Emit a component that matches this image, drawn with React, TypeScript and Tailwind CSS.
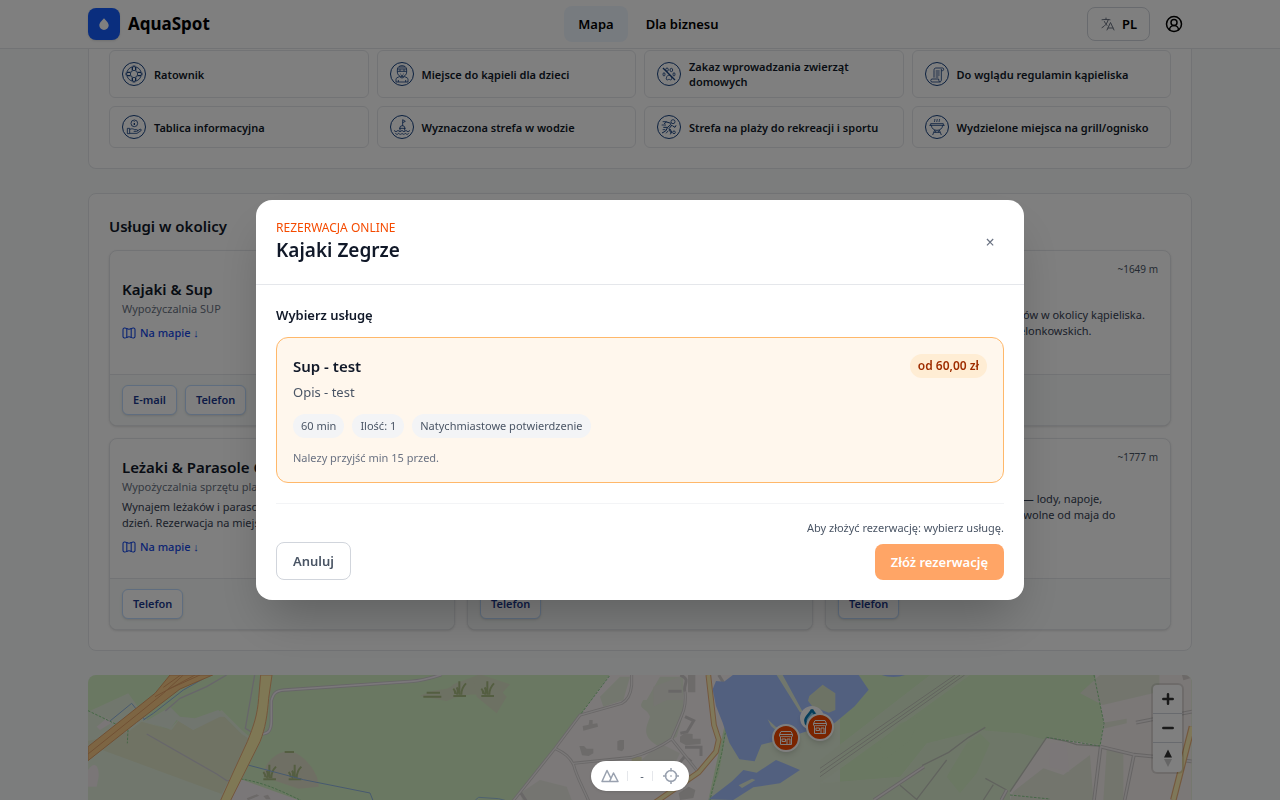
import { useState } from "react";
import type { ReactNode } from "react";
import { CircleUserRound } from "lucide-react";
import { HiOutlineLanguage } from "react-icons/hi2";

/* Amenity pictograms, drawn on a 72x72 grid */
const pictograms: Record<string, ReactNode> = {
  lifebuoy: (
    <>
      <circle cx="36" cy="36" r="22" />
      <circle cx="36" cy="36" r="11" />
      <path d="M31 15v10M41 15v10M31 47v10M41 47v10M15 31h10M15 41h10M47 31h10M47 41h10" strokeWidth="4" />
      <path d="M12 32v8M60 32v8M32 12h8M32 60h8" />
    </>
  ),
  child: (
    <>
      <path d="M22 24c0-9 6-13 14-13s14 4 14 13v6c0 8-6 14-14 14s-14-6-14-14z" />
      <path d="M22 21h28M22 28h28M27 15h18M30 22v6M42 22v6" />
      <path d="M31 36h2M39 36h2M33 40h6" />
      <path d="M18 60V52c0-4 4-6 11-8 2 5 12 5 14 0 7 2 11 4 11 8v8zM25 60v-6M47 60v-6" />
    </>
  ),
  noPets: (
    <>
      <ellipse cx="30" cy="23" rx="4" ry="5" />
      <ellipse cx="43" cy="24" rx="4" ry="5" />
      <ellipse cx="21" cy="37" rx="3" ry="5" />
      <ellipse cx="51" cy="37" rx="3" ry="5" />
      <path d="M29 53c-3-3 0-7 1-10 2-5 10-5 12 0 1 4 4 7 1 10-3 2-4-1-7-1s-4 3-7 1z" />
      <path d="M18 18l36 36" strokeWidth="4" />
    </>
  ),
  rules: (
    <>
      <path d="M27 47V25c0-5 2-7 6-7h20c4 0 4 8 0 8h-4v28c0 4-3 6-6 6H21c-5 0-5-9 0-9h20c0 6 2 9 5 9" />
      <path d="M32 27h12M32 33h12M32 39h12M32 45h8" />
      <path d="M49 26v-5" />
    </>
  ),
  info: (
    <>
      <circle cx="37" cy="25" r="10" />
      <path d="M37 24v6M37 19v1" strokeWidth="4" />
      <path d="M16 40h7v16h-7zM23 43c8-3 11-1 15 1h6c4 0 4 5 0 5h-9M45 48l9-5c4-1 5 2 3 4L45 55H23" />
    </>
  ),
  buoy: (
    <>
      <path d="M38 33V14l8 5-8 4M30 47V36c0-5 14-5 14 0v11M27 40h20" />
      <path d="M12 46c4 5 8 5 12 0 4 5 8 5 12 0 4 5 8 5 12 0 4 5 8 5 12 0M16 55c4 4 7 4 10 0 4 4 7 4 10 0 4 4 7 4 10 0 4 4 7 4 10 0" />
    </>
  ),
  sport: (
    <>
      <circle cx="48" cy="20" r="6" />
      <circle cx="51" cy="52" r="4" />
      <path d="M42 25l-13-4-8 5M43 27l-11 10-13 0M45 30l-9 11 5 12M32 37l-6 11-11 6M39 42l5 9-4 7M46 32l8 5 3-6" strokeWidth="3" />
      <path d="M17 20h12M14 30h13M17 44h8M27 55l7-8" />
    </>
  ),
  grill: (
    <>
      <path d="M17 26h38v5H17zM19 31c1 10 8 15 17 15s16-5 17-15M13 31h5M54 31h5" />
      <path d="M29 45l-6 15M43 45l6 15M27 52h18M32 47v5M40 47v5" />
      <path d="M29 21c-3-4 3-5 0-9M36 21c-3-4 3-5 0-9M43 21c-3-4 3-5 0-9" />
    </>
  ),
};

const amenities = [
  { icon: "lifebuoy", label: "Ratownik" },
  { icon: "child", label: "Miejsce do kąpieli dla dzieci" },
  { icon: "noPets", label: "Zakaz wprowadzania zwierząt domowych" },
  { icon: "rules", label: "Do wglądu regulamin kąpieliska" },
  { icon: "info", label: "Tablica informacyjna" },
  { icon: "buoy", label: "Wyznaczona strefa w wodzie" },
  { icon: "sport", label: "Strefa na plaży do rekreacji i sportu" },
  { icon: "grill", label: "Wydzielone miejsca na grill/ognisko" },
];

type Service = {
  name: string;
  kind?: string;
  text?: string;
  onMap?: boolean;
  distance?: string;
  actions: string[];
};

const services: Service[] = [
  { name: "Kajaki & Sup", kind: "Wypożyczalnia SUP", onMap: true, actions: ["E-mail", "Telefon"] },
  {
    name: "Kajaki Zegrze",
    text: "Kajaki i deski SUP na godziny lub na cały dzień.\nRezerwacja online albo na miejscu.",
    onMap: true,
    actions: ["Telefon"],
  },
  {
    name: "Parking leśny",
    text: "Parkingi dla samochodów lub rowerów w okolicy kąpieliska.\nDojazdy od strony ulicy Wczasów Zielonkowskich.",
    distance: "~1649 m",
    actions: [],
  },
  {
    name: "Leżaki & Parasole Chill",
    kind: "Wypożyczalnia sprzętu plażowego",
    text: "Wynajem leżaków i parasoli na godziny lub cały\ndzień. Rezerwacja na miejscu lub telefonicznie.",
    onMap: true,
    actions: ["Telefon"],
  },
  { name: "Szkoła żeglarstwa", kind: "Kursy i szkolenia", onMap: true, actions: ["Telefon"] },
  {
    name: "Bar na plaży",
    text: "Mała gastronomia przy samej plaży — lody, napoje,\nprzekąski. Czynne też w weekendy i wolne od maja do",
    onMap: true,
    distance: "~1777 m",
    actions: ["Telefon"],
  },
];

function Header() {
  return (
    <header className="border-b border-gray-200 bg-white">
      <div className="mx-auto flex h-12 max-w-6xl items-center justify-between px-6">
        <a href="#" className="flex items-center gap-2">
          <span className="flex size-8 items-center justify-center rounded-lg bg-blue-600 shadow-sm">
            <svg viewBox="0 0 16 16" className="size-4 fill-white">
              <path d="M8 2.2c.8 1.4 4.7 4 4.7 7.1a4.7 4.7 0 0 1-9.4 0C3.3 6.2 7.2 3.6 8 2.2z" />
            </svg>
          </span>
          <span className="text-[17px] leading-7 font-bold text-black">AquaSpot</span>
        </a>
        <nav className="flex gap-1 text-[13px] leading-5 font-semibold text-black">
          <a href="#" className="rounded-lg bg-blue-50 px-3.5 py-2">Mapa</a>
          <a href="#" className="rounded-lg px-3.5 py-2">Dla biznesu</a>
        </nav>
        <div className="flex items-center gap-1.5">
          <button className="flex items-center gap-1.5 rounded-lg border border-gray-300 px-3 py-1.5 text-[13px] leading-5 font-semibold text-black">
            <HiOutlineLanguage className="size-4 text-gray-500" />
            PL
          </button>
          <button className="flex size-9 items-center justify-center text-black" aria-label="Konto">
            <CircleUserRound className="size-[18px]" />
          </button>
        </div>
      </div>
    </header>
  );
}

function Amenities() {
  return (
    <section className="rounded-b-lg border border-t-0 border-gray-200 bg-white px-5 pt-px pb-5">
      <ul className="grid grid-cols-4 gap-2">
        {amenities.map((item) => (
          <li key={item.label} className="flex items-center gap-2 rounded-md border border-gray-200 px-3 py-2">
            <svg viewBox="0 0 72 72" className="size-6 shrink-0 fill-none stroke-[#16407f]" strokeWidth="2.5" strokeLinejoin="round">
              <circle cx="36" cy="36" r="34.5" strokeWidth="3" />
              {pictograms[item.icon]}
            </svg>
            <span className="text-[11px] leading-[15px] font-semibold text-gray-900">{item.label}</span>
          </li>
        ))}
      </ul>
    </section>
  );
}

function FoldedMapIcon() {
  return (
    <svg viewBox="0 0 14 14" className="size-3.5 fill-none stroke-current" strokeWidth="1.1" strokeLinejoin="round">
      <path d="M1 3.4C1 2 3 1.500 4.800 2.600 6.200 3.400 7.800 3.400 9.200 2.600 11 1.500 13 2 13 3.400V10.600C13 12 11 12.500 9.200 11.400 7.800 10.600 6.200 10.600 4.800 11.400 3 12.500 1 12 1 10.600z" />
      <path d="M4.8 2.600v8.800M9.200 2.600v8.800" />
    </svg>
  );
}

function ServiceCard({ service }: { service: Service }) {
  return (
    <article className="relative flex flex-col overflow-hidden rounded-lg border border-gray-200 bg-white shadow-sm">
      {service.distance && (
        <span className="absolute top-3 right-3 text-[10px] leading-3 text-gray-600">{service.distance}</span>
      )}
      <div className="flex flex-1 flex-col items-start justify-center px-3 pt-4 pb-[23px]">
        <h3 className="text-[15px] leading-6 font-semibold text-gray-900">{service.name}</h3>
        {service.kind && <p className="text-[11px] leading-4 text-gray-500">{service.kind}</p>}
        {service.text && <p className="mt-1 text-[11px] leading-4 whitespace-pre-line text-gray-700">{service.text}</p>}
        {service.onMap && (
          <a href="#mapa" className="mt-2 flex items-center gap-1 text-[11px] leading-4 font-medium text-blue-700">
            <FoldedMapIcon />
            Na mapie ↓
          </a>
        )}
      </div>
      <div className="flex h-[51px] items-center gap-2 border-t border-gray-200 bg-[#f8fbfa] px-3">
        {service.actions.map((action) => (
          <button
            key={action}
            className="h-[30px] rounded-md border border-blue-200 bg-white px-2.5 text-[11px] font-semibold text-blue-900 shadow-sm"
          >
            {action}
          </button>
        ))}
      </div>
    </article>
  );
}

function Services() {
  return (
    <section className="mt-6 rounded-lg border border-gray-200 bg-white p-5">
      <h2 className="text-[15px] leading-6 font-semibold text-gray-900">Usługi w okolicy</h2>
      <div className="mt-3 grid grid-cols-3 gap-3">
        {services.map((service) => (
          <ServiceCard key={service.name} service={service} />
        ))}
      </div>
    </section>
  );
}

function Reeds() {
  return (
    <path
      d="M0 46h38M10 42c4-8 4-16 0-22M18 42V2M24 42c0-14 4-24 14-34M6 40c0-8-2-12-6-16"
      fill="none"
      stroke="#a9bc82"
      strokeWidth="6"
    />
  );
}

function MapTerrain() {
  return (
    <svg viewBox="24 45 3312 1152" className="block w-full" fill="none">
      <rect x="24" y="45" width="3312" height="1152" fill="#d4f0c4" />

      {/* west side: fields and meadows */}
      <path d="M24 155L145 100l60 85 60 25 30-30 50 30 80-60 60 60 35 30-30 110-40 75-50 880H24z" fill="#e3efda" />
      <path d="M145 215l40-30 90 25 20-28 45 28 85-48 60 60 30 20-60 100-30 60-420-155z" fill="#dfe3c4" opacity=".8" />
      <path d="M195 185l60-35 15-10 30 30 45 5 70-25 20 20-15 0-80 40-50-30-20 28z" fill="#e3ecdf" />
      <path d="M24 330c20-30 34-10 32 20l-6 30H24zM50 200l30-25 20 10-40 25z" fill="#f4ecee" />
      <path d="M430 420l45-65 250 90 100 60v700H380z" fill="#f5eff0" />
      <path d="M500 415l30-12 8 4-34 14zM550 408l14-4 8 14h-14z" fill="#d8d2d0" />
      <path d="M550 350c0-40 40-76 76-76 34 0 90 56 90 106l-60 6z" fill="#dfdfc8" />
      <path d="M1020 108c60-30 80-10 100-35l80-30 90 30-40 45c-50-20-90-20-150 5z" fill="#dbe2c6" />
      <path d="M1180 60c60-20 50 0 100 50l-30 50-60-50z" fill="#dbe2c6" />
      <g transform="translate(550 312)"><Reeds /></g>
      <g transform="translate(626 312)"><Reeds /></g>
      <g transform="translate(1120 62)"><Reeds /></g>
      <g transform="translate(1204 62)"><Reeds /></g>
      <path d="M1030 110h54M1040 98h40M614 276h28" stroke="#a9bc82" strokeWidth="6" />
      <path d="M90 183l65-53 40 50M500 314l170 45 200 40 16 40M390 45l-80 45-90 70-30 20" stroke="#8fb4e0" strokeWidth="3" />
      <path d="M24 152l120 58-2 40M470 355c80 10 140 40 220 80" stroke="#8ed08e" strokeWidth="3" strokeDasharray="8 4" />
      <path d="M200 222l210 120 30 20 30 0M440 45l-60 35-80 35-44 38M524 45l-28 160 20 12" stroke="#cfcdd4" strokeWidth="4" />
      <path d="M540 222c20 0 34-4 34-40v-60c6-20 10-30 40-32l380-26c30-2 60-10 90-20" stroke="#cfcbd0" strokeWidth="10" />
      <path d="M540 222c20 0 34-4 34-40v-60c6-20 10-30 40-32l380-26c30-2 60-10 90-20" stroke="#f6f0f6" strokeWidth="5" />

      {/* motorway and primary road */}
      <path d="M24 260L225 100 270 45h128l-98 42-130 100L24 302z" fill="#fbcb86" stroke="#e0a068" strokeWidth="3" />
      <path d="M24 282L170 165l80-65 60-55M250 82l52-37M225 110l120-65M260 90l100-45" stroke="#e0a068" strokeWidth="3" />
      <path d="M542 45l-6 70c-4 50-14 80-34 130l-46 100-54 120h28l56-112 54-108c16-40 22-80 26-130l10-70z" fill="#fff0aa" stroke="#e9ac77" strokeWidth="3" />

      {/* village in the middle */}
      <g transform="translate(1080 0)">
        <path d="M508 45L420 165 345 265 110 560v637h600l95-777 70-320 30-55z" fill="#f8f2f2" />
        <path d="M480 110l60-60h30l-20 70-60 20zM620 120l40-70h70v110l-20 70-50 30c-60-30-40-60-30-90-10-30-40-20-20-50z" fill="#e6eedc" />
        <path d="M640 80l80-30 10 70-50 0-40 20zM240 400l60-40 80 20 30 80H260zM560 340l100-90 60 30-40 80z" fill="#ebebe2" />
        <path d="M877 100l-40 240-35 90h398V45H905z" fill="#e3f0da" />
        <path d="M575 290h30v14h-30z" fill="#ecebc4" />
        <path
          d="M575 45v30c-4 40-20 50-30 55l-125 35-75 100L110 560M345 265c30 14 44 26 56 50 10 40 30 70 50 120M400 310l175-18c60-16 90-34 120-55l80 100M695 237c40-90 44-100 40-142M735 95c-8-20 20-36-14-50M685 94h40M735 170l26 12-20 34-20 4M735 262h48v26M690 345l44-56 20 16M836 45l30 48M905 45l-36 52-48 2M240 395l40 60"
          stroke="#d3cfcf"
          strokeWidth="9"
        />
        <path
          d="M575 45v30c-4 40-20 50-30 55l-125 35-75 100L110 560M345 265c30 14 44 26 56 50 10 40 30 70 50 120M400 310l175-18c60-16 90-34 120-55l80 100M695 237c40-90 44-100 40-142"
          stroke="#f4f0f0"
          strokeWidth="4"
        />
        <path
          d="M428 198l18-4 2-14h10v12l14-2 2 10-44 12zM418 258h14l8 8h20v14l-14 8-20-2zM532 244l8-4h12v26l-6 8-14-4zM720 230l14-10 24 2v14h24v16l-44 4-18-10zM744 45h22v52h-22zM716 400l30-20 20 10-6 24-40 6z"
          fill="#dad6d4"
        />
        <path d="M805 45l17 150 14 44-8 36-52 62-130 90" stroke="#e9b07c" strokeWidth="17" />
        <path d="M805 45l17 150 14 44-8 36-52 62-130 90" stroke="#fff0b4" strokeWidth="11" />
        <path d="M508 48L424 160M877 100l-32 180-40 160" stroke="#8ed08e" strokeWidth="3" strokeDasharray="8 4" />
        <path d="M106 420l10-8 60 4 30 8" stroke="#9cc4e0" strokeWidth="3" />

        {/* lake */}
        <path
          d="M1010 45h190l56 0 30 44-42 50-60 50-70 20-90 30-60 15-20 50-46-6-30-50-20-60-20-50-10-50 10-25 24 2 40-30 60-24z"
          fill="#a5c1ff"
        />
        <path d="M1010 45h18l60 110-8 2zM983 178l24 22 16 8-14 4-16-14z" fill="#e3efda" />
        <path d="M1108 108l40-34 14 10 24 16v50l-20 8-50-20-12-16z" fill="#dbe6cb" />
        <path d="M806 418l70-54 34-34 40 8 58-38 24 10 48 20-60 40-80 12-60 38z" fill="#a5c1ff" />
        <path d="M896 376l40-20 10 4-40 24z" fill="#e3efda" />
      </g>

      {/* east side: railway, forest, allotments */}
      <g transform="translate(2220 0)">
        <path d="M185 45c20 8 50 8 70 0z" fill="#a5c1ff" />
        <path d="M0 300L330 45h120L0 370zM0 370l240-20 80-100 160-40 120 10 80 20-110 200H0z" fill="#e0efd6" opacity=".75" />
        <path d="M380 350l60-100 40-30 30 30-40 90-50 60zM180 250l60-60 60-20-30 70-80 60z" fill="#d4f0c4" opacity=".8" />
        <path d="M825 45h290v375H570v-25l110-165 160 25 10-70z" fill="#f6f0ee" />
        <path d="M780 100l60-55h178v50l-170 40zM850 188l70-12v14l-70 16zM860 270h50v150h-60zM580 395l90-70 60 20 80-60 10 135H570z" fill="#e6eadb" />
        <path d="M690 250l50 0 8 85-60-15z" fill="#f6eef0" />
        <path d="M0 325L405 45M0 338L420 45M0 350L434 45" stroke="#c4c8bc" strokeWidth="3" />
        <path d="M496 202l-50 30-60 45-80 40M380 300l-90 118M240 376l52 44M496 355l64 35M520 374l-30 46M680 232l60 12 30 10 70 4M570 395l110-163" stroke="#c2c6bc" strokeWidth="4" />
        <path d="M312 320l-60 40-90 60M560 390l-16 30M842 260l-20 160M842 260l100 24 60 6M942 284l-28 136M948 188l168-33M1000 290l115 14" stroke="#cdc9c9" strokeWidth="11" />
        <path d="M312 320l-60 40-90 60M560 390l-16 30M842 260l-20 160M842 260l100 24 60 6M942 284l-28 136M948 188l168-33M1000 290l115 14" stroke="#f1ecec" strokeWidth="5" />
        <path d="M822 45l30 145-12 68-160-26M570 405l120 12" stroke="#8ed08e" strokeWidth="3" strokeDasharray="8 4" />
        <path d="M1116 200l-56 220" stroke="#e9b07c" strokeWidth="20" />
        <path d="M1116 200l-56 220" stroke="#fff0b4" strokeWidth="13" />
        <path d="M1086 45h20l4 10-20 6z" fill="#d8d2d0" />
      </g>
    </svg>
  );
}

function StorePin({ className }: { className: string }) {
  return (
    <button
      aria-label="Usługa na mapie"
      className={`absolute flex size-7 items-center justify-center rounded-full border-2 border-white bg-[#f54900] shadow-md ${className}`}
    >
      <svg viewBox="0 0 16 16" className="size-4 fill-none stroke-white" strokeWidth="1">
        <path d="M3 1.5h10l1.5 3V6c0 1-2 1-2.2 0 0 1-2 1-2.2 0 0 1-2.1 1-2.1 0 0 1-2.1 1-2.1 0-.2 1-2.2 1-2.2 0-.2 1-2.2 1-2.2 0V4.5z" />
        <path d="M2.5 7v7.5h11V7M1.5 4.5h13M4 9h3.5v2.5H4zM9 14.5V9h3v5.5" />
      </svg>
    </button>
  );
}

function LocationMap() {
  return (
    <section id="mapa" className="relative mt-6 overflow-hidden rounded-lg">
      <MapTerrain />
      <button
        aria-label="Kąpielisko"
        className="absolute top-[31px] left-[64.5%] flex size-6 items-center justify-center rounded-full bg-white shadow-md"
      >
        <svg viewBox="0 0 24 24" className="size-5 fill-[#8fd3f4] stroke-[#0a7ab5]" strokeWidth="3">
          <path d="M12 2c1 4 8 8 8 13a8 8 0 0 1-16 0c0-5 7-9 8-13z" />
        </svg>
      </button>
      <StorePin className="top-[49px] left-[62%]" />
      <StorePin className="top-[38px] left-[65%]" />
      <div className="absolute top-2.5 right-2.5 flex w-[29px] flex-col divide-y divide-gray-300 rounded bg-white ring-2 ring-black/10">
        <button aria-label="Przybliż" className="flex h-[29px] items-center justify-center">
          <svg viewBox="0 0 12 12" className="size-3 stroke-[#333]" strokeWidth="2.5" strokeLinecap="round">
            <path d="M6 1.3v9.4M1.3 6h9.4" />
          </svg>
        </button>
        <button aria-label="Oddal" className="flex h-[29px] items-center justify-center">
          <svg viewBox="0 0 12 12" className="size-3 stroke-[#333]" strokeWidth="2.5" strokeLinecap="round">
            <path d="M1.3 6h9.4" />
          </svg>
        </button>
        <button aria-label="Północ" className="flex h-[29px] items-center justify-center">
          <svg viewBox="0 0 8 18" className="h-[18px] w-2">
            <path d="M0 8.5L4 .5l4 8z" fill="#333" />
            <path d="M0 10l4 8 4-8z" fill="#ccc" />
          </svg>
        </button>
      </div>
    </section>
  );
}

function BookingDialog() {
  const [selected, setSelected] = useState(false);

  return (
    <div className="fixed inset-0 z-20 flex items-center justify-center bg-black/50 px-4">
      <div role="dialog" aria-labelledby="booking-title" className="w-full max-w-3xl rounded-2xl bg-white shadow-2xl">
        <div className="flex items-center justify-between border-b border-gray-200 p-5">
          <div>
            <p className="text-xs text-orange-600 uppercase">Rezerwacja online</p>
            <h2 id="booking-title" className="text-[19px] leading-7 font-semibold text-gray-900">Kajaki Zegrze</h2>
          </div>
          <button aria-label="Zamknij" className="flex size-7 items-center justify-center text-base text-gray-500">
            ×
          </button>
        </div>
        <div className="p-5">
          <h3 className="text-[13px] leading-5 font-semibold text-gray-900">Wybierz usługę</h3>
          <button
            aria-pressed={selected}
            onClick={() => setSelected((v) => !v)}
            className="mt-3 block w-full rounded-xl border border-orange-300 bg-orange-50 p-4 text-left"
          >
            <span className="flex items-start justify-between">
              <span className="text-[15px] leading-6 font-semibold text-gray-900">Sup - test</span>
              <span className="rounded-full bg-orange-100 px-2 py-1 text-xs font-semibold text-orange-800">od 60,00 zł</span>
            </span>
            <span className="mt-1 block text-[13px] leading-5 text-gray-600">Opis - test</span>
            <span className="mt-3 flex gap-2 text-[11px] leading-4 text-gray-600">
              <span className="rounded-full bg-gray-100 px-2 py-1">60 min</span>
              <span className="rounded-full bg-gray-100 px-2 py-1">Ilość: 1</span>
              <span className="rounded-full bg-gray-100 px-2 py-1">Natychmiastowe potwierdzenie</span>
            </span>
            <span className="mt-3 block text-[11px] leading-4 text-gray-500">Nalezy przyjść min 15 przed.</span>
          </button>
          <div className="mt-5 flex items-end justify-between border-t border-gray-100 pt-4">
            <button className="rounded-lg border border-gray-300 px-4 py-2 text-[13px] leading-5 font-semibold text-gray-600">
              Anuluj
            </button>
            <div className="flex flex-col items-end gap-2">
              <p className="text-[11px] leading-4 text-gray-600">Aby złożyć rezerwację: wybierz usługę.</p>
              <button disabled className="rounded-lg bg-orange-500 px-4 py-2 text-[13px] leading-5 font-semibold text-white opacity-60">
                Złóż rezerwację
              </button>
            </div>
          </div>
        </div>
      </div>
    </div>
  );
}

function FloatingBar() {
  return (
    <div className="fixed inset-x-0 bottom-[9px] z-30 flex justify-center">
      <div className="flex h-[30px] items-center rounded-full bg-white px-2.5 text-gray-400 shadow-sm">
        <button aria-label="Teren">
          <svg viewBox="0 0 18 14" className="h-3.5 w-[18px] fill-none stroke-current" strokeWidth="1.5" strokeLinejoin="round">
            <path d="M1 12.5L6 1.5l4 8-1.5 3zM8.5 12.5L12.5 4l4.5 8.5z" />
          </svg>
        </button>
        <span className="ml-2 h-2.5 w-px bg-gray-200" />
        <span className="w-6 pl-1 text-center text-[11px] text-gray-600">-</span>
        <span className="mr-2.5 h-2.5 w-px bg-gray-200" />
        <button aria-label="Moja lokalizacja">
          <svg viewBox="0 0 16 16" className="size-4 fill-none stroke-current" strokeWidth="1.5">
            <circle cx="8" cy="8" r="5.5" />
            <path d="M8 0v3.5M8 12.5V16M0 8h3.5M12.5 8H16M7.3 8h1.4" />
          </svg>
        </button>
      </div>
    </div>
  );
}

export default function App() {
  return (
    <div className="h-screen overflow-hidden bg-[#f8fbfa] font-['Noto_Sans','Open_Sans',sans-serif]">
      <Header />
      <main className="mx-auto max-w-6xl px-6">
        <Amenities />
        <Services />
        <LocationMap />
      </main>
      <BookingDialog />
      <FloatingBar />
    </div>
  );
}
